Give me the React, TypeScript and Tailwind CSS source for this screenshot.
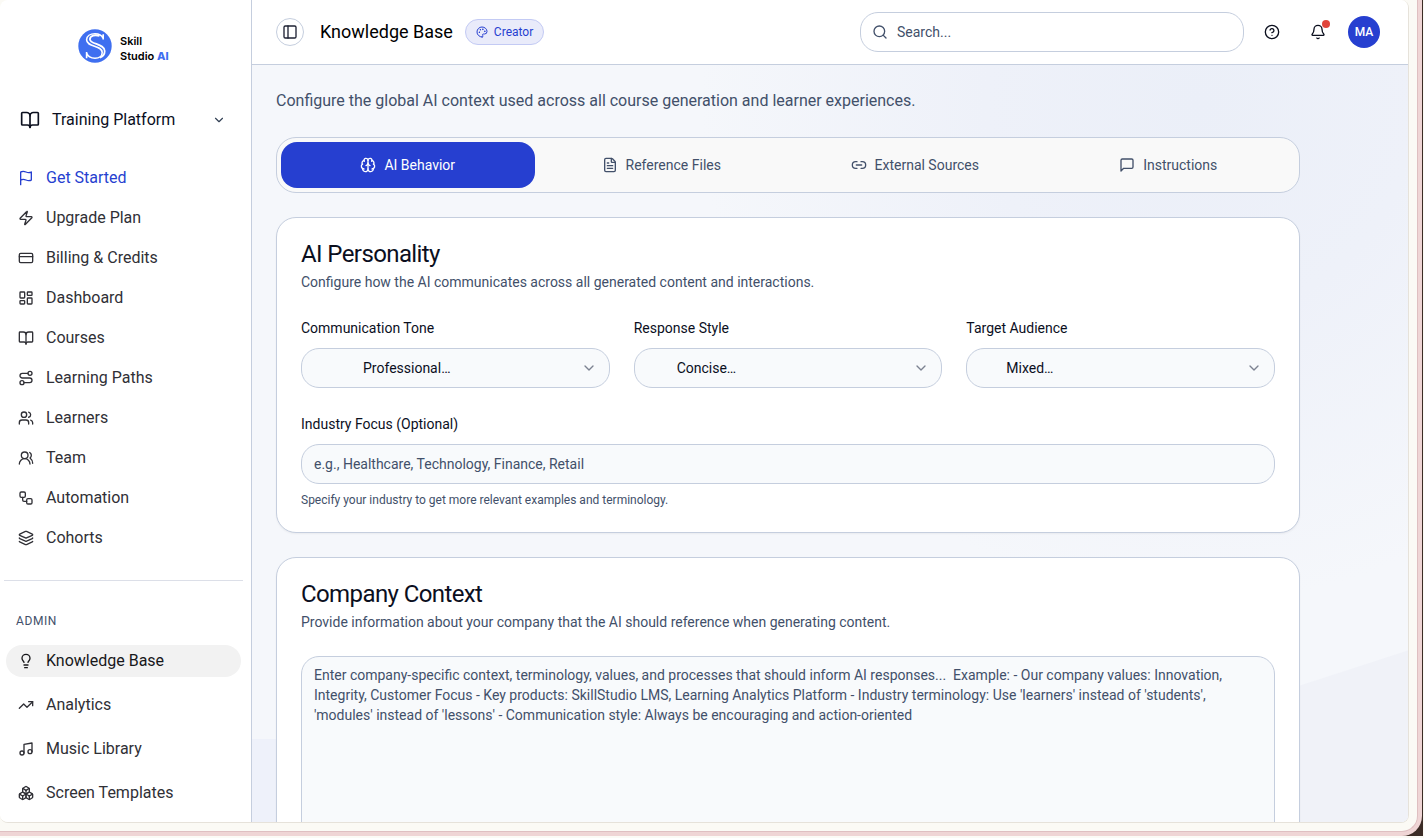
import { useState } from "react";
import type { ComponentType, ReactNode } from "react";
import {
    Bell,
    BookOpen,
    Boxes,
    Brain,
    ChevronDown,
    CircleHelp,
    CreditCard,
    FileText,
    Layers,
    LayoutDashboard,
    Lightbulb,
    Link2,
    Music,
    Palette,
    PanelLeft,
    Route,
    Search,
    TrendingUp,
    Users,
    UsersRound,
    Workflow,
    Zap,
} from "lucide-react";

interface IIconProps {
    size?: number;
    strokeWidth?: number;
}

interface INavItem {
    label: string;
    icon: ComponentType<IIconProps>;
}

const FlagIcon = ({ size = 16, strokeWidth = 2 }: IIconProps) => (
    <svg
        width={size}
        height={size}
        viewBox="0 0 24 24"
        fill="none"
        stroke="currentColor"
        strokeWidth={strokeWidth}
        strokeLinecap="round"
        strokeLinejoin="round"
    >
        <path d="M4 15s1-1 4-1 5 2 8 2 4-1 4-1V3s-1 1-4 1-5-2-8-2-4 1-4 1z" />
        <path d="M4 22v-7" />
    </svg>
);

const MessageIcon = ({ size = 16, strokeWidth = 2 }: IIconProps) => (
    <svg
        width={size}
        height={size}
        viewBox="0 0 24 24"
        fill="none"
        stroke="currentColor"
        strokeWidth={strokeWidth}
        strokeLinecap="round"
        strokeLinejoin="round"
    >
        <path d="M21 15a2 2 0 0 1-2 2H7l-4 4V5a2 2 0 0 1 2-2h14a2 2 0 0 1 2 2z" />
    </svg>
);

const mainItems: INavItem[] = [
    { label: "Get Started", icon: FlagIcon },
    { label: "Upgrade Plan", icon: Zap },
    { label: "Billing & Credits", icon: CreditCard },
    { label: "Dashboard", icon: LayoutDashboard },
    { label: "Courses", icon: BookOpen },
    { label: "Learning Paths", icon: Route },
    { label: "Learners", icon: Users },
    { label: "Team", icon: UsersRound },
    { label: "Automation", icon: Workflow },
    { label: "Cohorts", icon: Layers },
];

const adminItems: INavItem[] = [
    { label: "Knowledge Base", icon: Lightbulb },
    { label: "Analytics", icon: TrendingUp },
    { label: "Music Library", icon: Music },
    { label: "Screen Templates", icon: Boxes },
];

const tabs: INavItem[] = [
    { label: "AI Behavior", icon: Brain },
    { label: "Reference Files", icon: FileText },
    { label: "External Sources", icon: Link2 },
    { label: "Instructions", icon: MessageIcon },
];

const selects = [
    { id: "tone", label: "Communication Tone", value: "Professional…", pad: "pl-[61px]" },
    { id: "style", label: "Response Style", value: "Concise…", pad: "pl-[42px]" },
    { id: "audience", label: "Target Audience", value: "Mixed…", pad: "pl-[39px]" },
];

const contextPlaceholder =
    "Enter company-specific context, terminology, values, and processes that should inform AI responses...  Example: - Our company values: Innovation, Integrity, Customer Focus - Key products: SkillStudio LMS, Learning Analytics Platform - Industry terminology: Use 'learners' instead of 'students', 'modules' instead of 'lessons' - Communication style: Always be encouraging and action-oriented";

const Logo = () => (
    <div className="flex items-center gap-2 pl-[78px]">
        <svg viewBox="0 0 34 34" className="size-[34px]" fill="none">
            <circle cx="17" cy="17" r="16.7" fill="#3f6ff0" />
            <path
                d="M25.2 10.6V5.2M25.2 9.4C23.8 6.4 20.8 4.8 17 4.8c-4.8 0-8.4 2.2-8.4 6 0 7.6 15.6 5.4 15.6 12.6 0 3.6-3 5.8-7.2 5.8-4.4 0-7.2-2-8.4-5.2M8.6 23v6.2"
                stroke="white"
                strokeWidth="1.6"
            />
            <path
                d="M21.5 7c-4-1.6-9.6-.6-9.6 3.2 0 5.4 14.8 4.2 14.8 11.8 0 3.2-2 5.6-4.8 6.6"
                stroke="white"
                strokeWidth="1.8"
            />
        </svg>
        <p className="pt-1.5 font-['Inter',sans-serif] text-[11px] leading-[15px] font-semibold text-black">
            Skill
            <br />
            Studio <span className="font-extrabold text-[#3f6ff0]">AI</span>
        </p>
    </div>
);

const Sidebar = () => (
    <aside className="flex w-[252px] shrink-0 flex-col border-r border-[#c5cede] bg-white pt-7">
        <Logo />

        <button className="mt-11 mr-[25px] ml-5 flex items-center text-left text-base text-[#0b0f1e]">
            <BookOpen size={20} />
            <span className="ml-3 flex-1">Training Platform</span>
            <ChevronDown size={14} className="text-[#334155]" />
        </button>

        <nav className="mt-[30px] flex flex-col gap-2 pr-2.5 pl-1.5">
            {mainItems.map(({ label, icon: Icon }, i) => (
                <a
                    key={label}
                    href="#"
                    className={`flex h-8 items-center gap-3 rounded-full px-3 text-base ${
                        i === 0 ? "text-[#263fd0]" : "text-[#303036]"
                    }`}
                >
                    <Icon size={16} strokeWidth={2} />
                    {label}
                </a>
            ))}
        </nav>

        <hr className="mt-[26px] mr-2 ml-1 border-[#dcdfe8]" />

        <h2 className="mt-8 ml-4 text-xs tracking-wider text-[#42506a]">ADMIN</h2>
        <nav className="mt-4 flex flex-col gap-3 pr-2.5 pl-1.5">
            {adminItems.map(({ label, icon: Icon }, i) => (
                <a
                    key={label}
                    href="#"
                    className={`flex h-8 items-center gap-3 rounded-full px-3 text-base ${
                        i === 0 ? "bg-[#f2f2f2] text-[#18181b]" : "text-[#303036]"
                    }`}
                >
                    <Icon size={16} strokeWidth={2} />
                    {label}
                </a>
            ))}
        </nav>
    </aside>
);

const Header = () => (
    <header className="flex h-[65px] shrink-0 items-center border-b border-[#c5cede] bg-white pr-7 pl-6">
        <button
            aria-label="Toggle sidebar"
            className="flex size-7 items-center justify-center rounded-full border border-[#c5cede] text-[#1e2233]"
        >
            <PanelLeft size={16} />
        </button>
        <h1 className="ml-4 text-lg text-black">Knowledge Base</h1>
        <span className="ml-3 flex h-[26px] items-center gap-1.5 rounded-full border border-[#c3caf4] bg-[#e9ebfa] px-2.5 text-xs text-[#263fd0]">
            <Palette size={12} />
            Creator
        </span>

        <label className="ml-auto flex h-10 w-96 items-center gap-[9px] rounded-[18px] border border-[#c5cede] pr-3 pl-[11px] text-[#42506a]">
            <Search size={16} />
            <input
                aria-label="Search"
                placeholder="Search..."
                className="min-w-0 flex-1 text-sm outline-none placeholder:text-[#42506a]"
            />
        </label>
        <button aria-label="Help" className="ml-5 text-[#0b0f1e]">
            <CircleHelp size={16} />
        </button>
        <button aria-label="Notifications" className="relative ml-[30px] text-[#0b0f1e]">
            <Bell size={16} />
            <span className="absolute -top-1 -right-1 size-2 rounded-full bg-[#e0453c]" />
        </button>
        <button className="ml-[22px] size-8 rounded-full bg-[#263fd0] text-xs font-medium text-white">
            MA
        </button>
    </header>
);

interface ICardProps {
    title: string;
    description: string;
    children: ReactNode;
}

const Card = ({ title, description, children }: ICardProps) => (
    <section className="mt-6 rounded-[20px] border border-[#c5cede] bg-white px-6 pt-5 pb-6 shadow-xs">
        <h2 className="text-2xl tracking-tight text-[#0b0f1e]">{title}</h2>
        <p className="mt-0.5 text-sm text-[#42506a]">{description}</p>
        {children}
    </section>
);

const App = () => {
    const [activeTab, setActiveTab] = useState<string>("AI Behavior");

    return (
        <div className="h-screen overflow-hidden bg-[#fbfaf5] pr-px pb-0.5">
            {/* outer frame */}
            <div className="h-full bg-[#3b2c26] pr-px font-['Roboto',sans-serif]">
                <div className="h-full rounded-br-[20px] bg-[#efd5d5] pr-1 pb-1">
                    <div className="h-full rounded-br-[16px] border-r border-b border-[#dfbfc1] bg-[#fbfaf5] pr-2 pb-2">
                        <div className="flex h-full overflow-hidden rounded-lg border-r border-b border-[#e6e2da]">
                            <Sidebar />

                            <div className="flex min-w-0 flex-1 flex-col">
                                <Header />

                                <main className="min-h-0 flex-1 overflow-hidden bg-[#f5f7fb] bg-[linear-gradient(162deg,transparent_84.8%,#f0f2f8_84.9%),linear-gradient(180deg,transparent_89%,#eef1fa_89.1%),radial-gradient(circle_at_82%_5%,#ebeff8_0%,#eef1f9_18%,#f5f7fb_42%)] px-6 pt-6">
                                    <div className="max-w-5xl">
                                        <p className="text-base text-[#42506a]">
                                            Configure the global AI context used across all course generation and learner
                                            experiences.
                                        </p>

                                        {/* tabs */}
                                        <div
                                            role="tablist"
                                            className="mt-6 grid h-14 grid-cols-4 rounded-[20px] border border-[#c5cede] bg-[#f9f9f9] p-1"
                                        >
                                            {tabs.map(({ label, icon: Icon }) => (
                                                <button
                                                    key={label}
                                                    role="tab"
                                                    aria-selected={activeTab === label}
                                                    onClick={() => setActiveTab(label)}
                                                    className={`flex items-center justify-center gap-2 rounded-2xl text-sm ${
                                                        activeTab === label ? "bg-[#263fd0] text-white" : "text-[#42506a]"
                                                    }`}
                                                >
                                                    <Icon size={16} />
                                                    {label}
                                                </button>
                                            ))}
                                        </div>

                                        <Card
                                            title="AI Personality"
                                            description="Configure how the AI communicates across all generated content and interactions."
                                        >
                                            <div className="mt-[26px] grid grid-cols-3 gap-6">
                                                {selects.map(({ id, label, value, pad }) => (
                                                    <div key={id}>
                                                        <label htmlFor={id} className="block text-sm text-[#0b0f1e]">
                                                            {label}
                                                        </label>
                                                        <div className="relative mt-2.5">
                                                            <select
                                                                id={id}
                                                                className={`h-10 w-full appearance-none rounded-[18px] border border-[#c5cede] bg-[#f8fafc] text-sm text-[#0b0f1e] ${pad}`}
                                                            >
                                                                <option>{value}</option>
                                                            </select>
                                                            <ChevronDown
                                                                size={16}
                                                                className="pointer-events-none absolute top-3 right-[13px] text-[#7c8291]"
                                                            />
                                                        </div>
                                                    </div>
                                                ))}
                                            </div>

                                            <label htmlFor="industry" className="mt-[26px] block text-sm text-[#0b0f1e]">
                                                Industry Focus (Optional)
                                            </label>
                                            <input
                                                id="industry"
                                                placeholder="e.g., Healthcare, Technology, Finance, Retail"
                                                className="mt-2.5 h-10 w-full rounded-[18px] border border-[#c5cede] bg-[#f8fafc] px-3 text-sm placeholder:text-[#42506a]"
                                            />
                                            <p className="mt-2 text-xs text-[#42506a]">
                                                Specify your industry to get more relevant examples and terminology.
                                            </p>
                                        </Card>

                                        <Card
                                            title="Company Context"
                                            description="Provide information about your company that the AI should reference when generating content."
                                        >
                                            <textarea
                                                aria-label="Company context"
                                                placeholder={contextPlaceholder}
                                                className="mt-6 block h-[300px] w-full resize-none rounded-[18px] border border-[#c5cede] bg-[#f8fafc] px-3 py-2 text-sm placeholder:text-[#42506a]"
                                            />
                                        </Card>
                                    </div>
                                </main>
                            </div>
                        </div>
                    </div>
                </div>
            </div>
        </div>
    );
};

export default App;
